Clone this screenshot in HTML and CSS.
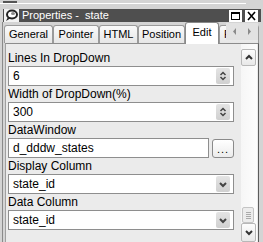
FILE: index.html
```html
<!DOCTYPE html>
<html>
<head>
    <meta charset="utf-8">
    <title>Properties - state</title>
    <link rel="stylesheet" href="styles.css">
</head>
<body>
    <div class="top">
        <div class="grip"></div>
        <div class="hl"></div>
    </div>

    <div class="win">
        <div class="titlebar">
            <svg class="appicon" width="15" height="13" viewBox="0 0 15 13">
                <rect x="0" y="0" width="15" height="13" fill="#f2f2f2"/>
                <ellipse cx="8" cy="5.5" rx="5" ry="4" fill="#fff" stroke="#222" stroke-width="2"/>
                <path d="M4 8 L2 12 L7 9" fill="#222"/>
                <ellipse cx="9" cy="4.5" rx="2" ry="1.5" fill="#888"/>
            </svg>
            <span class="title">Properties -&nbsp; state</span>
            <span class="tbtn max">
                <svg width="13" height="12" viewBox="0 0 13 12">
                    <rect x="0" y="0" width="13" height="12" fill="#fff"/>
                    <rect x="2.5" y="2.5" width="8" height="7" fill="none" stroke="#000" stroke-width="1"/>
                    <rect x="2" y="2" width="9" height="2" fill="#000"/>
                </svg>
            </span>
            <span class="tbtn">
                <svg width="13" height="12" viewBox="0 0 13 12">
                    <rect x="0" y="0" width="13" height="12" fill="#fff"/>
                    <path d="M3 2 L10 10 M10 2 L3 10" stroke="#000" stroke-width="1.6"/>
                </svg>
            </span>
        </div>

        <div class="tabs">
            <div class="tab w-general">General</div>
            <div class="tab w-pointer">Pointer</div>
            <div class="tab w-html">HTML</div>
            <div class="tab w-position">Position</div>
            <div class="tab sel w-edit">Edit</div>
            <div class="tab w-f">F</div>
            <div class="tabscroll">
                <svg width="32" height="17" viewBox="0 0 32 17">
                    <path d="M10 5 L7 8.5 L10 12 Z" fill="#8a8a8a"/>
                    <path d="M22 5 L25 8.5 L22 12 Z" fill="#8a8a8a"/>
                </svg>
            </div>
        </div>

        <div class="body">
            <div class="panel">
                <div class="fields">
                    <div class="label">Lines In DropDown</div>
                    <div class="box">
                        <span class="val">6</span>
                        <span class="btn">
                            <svg width="14" height="16" viewBox="0 0 14 16">
                                <path d="M4.5 7 L7 4.5 L9.5 7" fill="none" stroke="#444" stroke-width="1.5"/>
                                <path d="M4.5 9 L7 11.5 L9.5 9" fill="none" stroke="#444" stroke-width="1.5"/>
                            </svg>
                        </span>
                    </div>

                    <div class="label">Width of DropDown(%)</div>
                    <div class="box">
                        <span class="val">300</span>
                        <span class="btn">
                            <svg width="14" height="16" viewBox="0 0 14 16">
                                <path d="M4.5 7 L7 4.5 L9.5 7" fill="none" stroke="#444" stroke-width="1.5"/>
                                <path d="M4.5 9 L7 11.5 L9.5 9" fill="none" stroke="#444" stroke-width="1.5"/>
                            </svg>
                        </span>
                    </div>

                    <div class="label">DataWindow</div>
                    <div class="row">
                        <div class="box grow">
                            <span class="val">d_dddw_states</span>
                        </div>
                        <div class="dots">...</div>
                    </div>

                    <div class="label">Display Column</div>
                    <div class="box">
                        <span class="val">state_id</span>
                        <span class="btn">
                            <svg width="14" height="16" viewBox="0 0 14 16">
                                <path d="M4 7 L7 10 L10 7" fill="none" stroke="#444" stroke-width="2"/>
                            </svg>
                        </span>
                    </div>

                    <div class="label">Data Column</div>
                    <div class="box">
                        <span class="val">state_id</span>
                        <span class="btn">
                            <svg width="14" height="16" viewBox="0 0 14 16">
                                <path d="M4 7 L7 10 L10 7" fill="none" stroke="#444" stroke-width="2"/>
                            </svg>
                        </span>
                    </div>
                </div>

                <div class="vscroll">
                    <div class="sbtn">
                        <svg width="14" height="15" viewBox="0 0 14 15">
                            <path d="M4 9 L7 6 L10 9" fill="none" stroke="#333" stroke-width="2"/>
                        </svg>
                    </div>
                    <div class="track"></div>
                    <div class="thumb">
                        <svg width="11" height="14" viewBox="0 0 11 14">
                            <path d="M3 4.5 H8 M3 6.5 H8 M3 8.5 H8 M3 10.5 H8" stroke="#aaa" stroke-width="1"/>
                        </svg>
                    </div>
                    <div class="sbtn">
                        <svg width="14" height="17" viewBox="0 0 14 17">
                            <path d="M4 7 L7 10 L10 7" fill="none" stroke="#333" stroke-width="2"/>
                        </svg>
                    </div>
                </div>
            </div>
        </div>
    </div>
</body>
</html>
```

FILE: styles.css
```css
body {
    margin: 0;
    width: 263px;
    height: 242px;
    overflow: hidden;
    background: #d4d4d4;
    font-family: "Liberation Sans", Arial, sans-serif;
    font-size: 12px;
    color: #000;
}

.top {
    height: 9px;
}

.grip {
    width: 14px;
    height: 2px;
    margin-left: 3px;
    padding-top: 1px;
    background: #555;
    background-clip: content-box;
}

.hl {
    width: 246px;
    height: 1px;
    background: #fff;
}

.win {
    margin-left: 3px;
    width: 258px;
}

.titlebar {
    height: 13px;
    background: #4f4f4f;
    display: flex;
    align-items: center;
}

.appicon {
    margin-left: 1px;
    display: block;
}

.title {
    margin-left: 3px;
    color: #fff;
    font-size: 11px;
    line-height: 13px;
}

.tbtn {
    display: block;
    height: 12px;
    margin-right: 3px;
}

.tbtn.max {
    margin-left: auto;
}

.tbtn svg {
    display: block;
}

.tabs {
    height: 21px;
    display: flex;
    align-items: flex-end;
    position: relative;
    border-left: 1px solid #8a8a8a;
    margin-left: -1px;
    padding-left: 1px;
}

.tab {
    box-sizing: border-box;
    height: 18px;
    border: 1px solid #9a9a9a;
    border-bottom: none;
    border-radius: 3px 3px 0 0;
    background: linear-gradient(#fafafa, #e6e6e6);
    font-size: 11px;
    line-height: 17px;
    text-align: center;
    flex-shrink: 0;
}

.tab.sel {
    height: 22px;
    margin-bottom: -1px;
    background: #fff;
    border-color: #8a8a8a;
    line-height: 19px;
    position: relative;
    z-index: 1;
}

.w-general { width: 49px; }
.w-pointer { width: 46px; }
.w-html { width: 39px; }
.w-position { width: 47px; }
.w-edit { width: 34px; }
.w-f { width: 40px; text-align: left; padding-left: 4px; }

.tabscroll {
    position: absolute;
    left: 223px;
    top: 1px;
    width: 32px;
    height: 17px;
    background: #e2e2e2;
    z-index: 2;
}

.tabscroll svg {
    display: block;
}

.body {
    height: 199px;
    border-left: 1px solid #8a8a8a;
    margin-left: -1px;
    padding-left: 2px;
    display: flex;
}

.panel {
    flex: 1;
    display: flex;
    background: #ebebeb;
    border-top: 1px solid #8c8c8c;
    border-left: 1px solid #a0a0a0;
    border-right: 1px solid #5c5c5c;
    margin-right: 2px;
}

.fields {
    width: 226px;
    padding: 6px 5px 0 2px;
}

.label {
    height: 16px;
    line-height: 16px;
}

.box {
    box-sizing: border-box;
    height: 20px;
    background: #fff;
    border: 1px solid #8e8e8e;
    display: flex;
    align-items: center;
}

.val {
    padding-left: 4px;
    flex: 1;
}

.btn {
    display: block;
    width: 14px;
    height: 16px;
    margin-right: 3px;
    border-radius: 2px;
    background: linear-gradient(#e4e4e4, #d0d0d0);
}

.btn svg {
    display: block;
}

.row {
    display: flex;
    align-items: center;
}

.grow {
    flex: 1;
    margin-right: 3px;
}

.dots {
    box-sizing: border-box;
    width: 22px;
    height: 19px;
    border: 1px solid #8a8a8a;
    border-radius: 3px;
    background: linear-gradient(#ffffff, #ececec);
    font-size: 11px;
    line-height: 18px;
    text-align: center;
    letter-spacing: 1px;
}

.vscroll {
    width: 17px;
    margin-left: 1px;
    padding-top: 5px;
    display: flex;
    flex-direction: column;
    align-items: flex-start;
    background: linear-gradient(to right, #ebebeb, #ebebeb 1px, #f6f6f6 1px, #fdfdfd);
}

.sbtn {
    box-sizing: border-box;
    width: 15px;
    border: 1px solid #b8b8b8;
    border-radius: 2px;
    background: linear-gradient(#fdfdfd, #e8e8e8);
    margin-left: 1px;
}

.sbtn svg {
    display: block;
}

.track {
    flex: 1;
}

.thumb {
    box-sizing: border-box;
    width: 12px;
    height: 16px;
    margin-left: 2px;
    border: 1px solid #c4c4c4;
    border-radius: 2px;
    background: #ececec;
}

.thumb svg {
    display: block;
}
```
